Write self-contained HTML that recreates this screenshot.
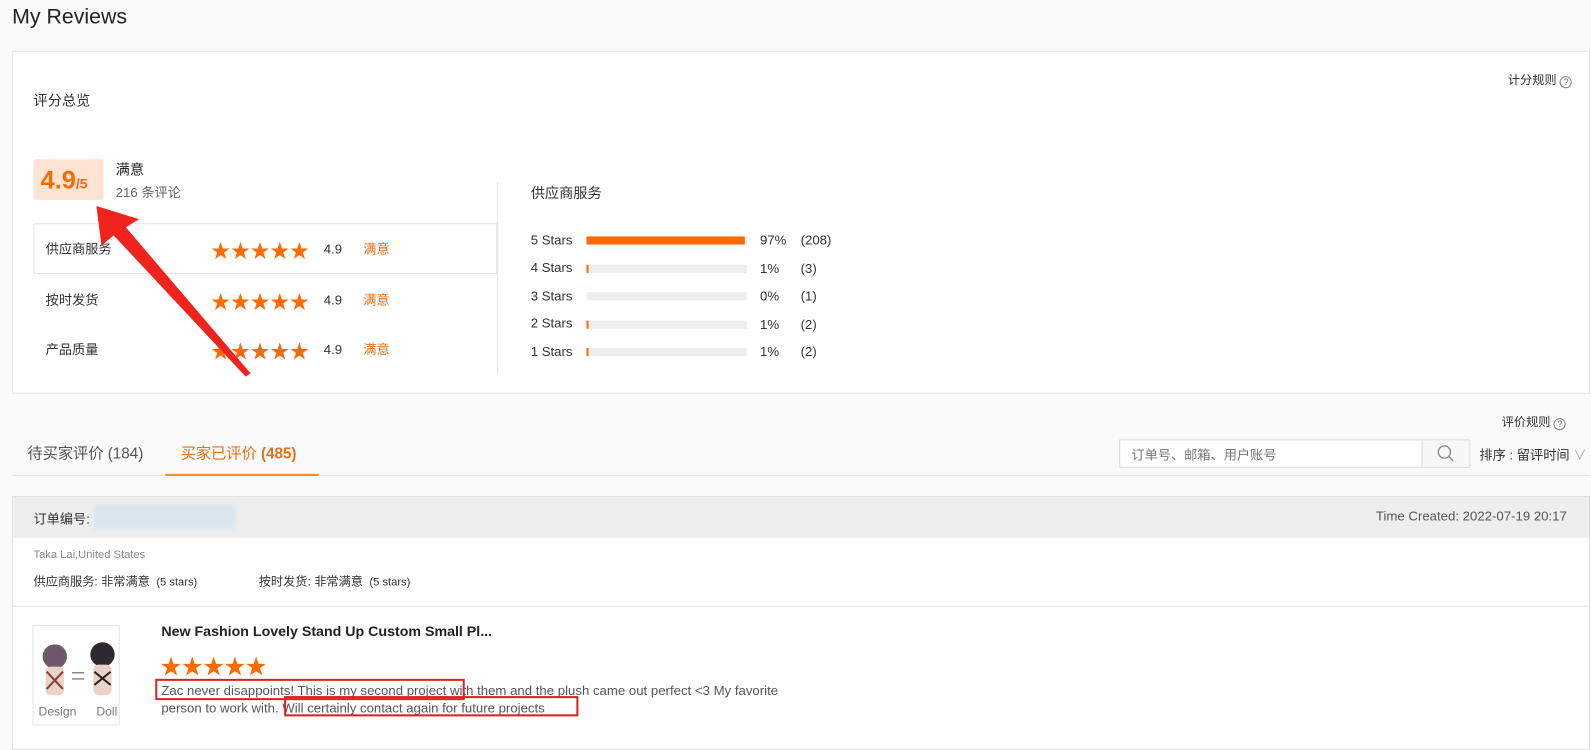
<!DOCTYPE html>
<html><head><meta charset="utf-8"><style>
*{margin:0;padding:0;box-sizing:border-box}
body{width:1591px;height:734px;overflow:hidden;background:#fafafa;font-family:"Liberation Sans","Noto Sans CJK SC",sans-serif;color:#333;position:relative}
#w{position:absolute;left:0;top:0;width:1568px;height:724px;transform:scale(1.0147);transform-origin:0 0}
.a{position:absolute;white-space:nowrap}
.star{color:#ff6a00;letter-spacing:0}
.bar{position:absolute;left:578px;width:158px;height:8px;background:#eee}
.bar i{display:block;height:8px;background:#ff6a00}
.q{display:inline-block;width:12px;height:12px;border:1px solid #888;border-radius:50%;font-size:9px;text-align:center;line-height:10px;color:#666;vertical-align:-1px}
</style></head><body><div id="w">
<div class="a" style="left:12px;top:5px;font-size:21px;color:#222">My Reviews</div>
<div class="a" style="left:12px;top:50px;width:1555px;height:338px;background:#fff;border:1px solid #e3e3e3"></div>
<div class="a" style="left:33px;top:89px;font-size:14px">评分总览</div>
<div class="a" style="left:1486px;top:70px;font-size:12px">计分规则 <span class="q">?</span></div>
<div class="a" style="left:33px;top:157px;width:69px;height:40px;background:#fde3d2;border-radius:2px;color:#ff6a00;font-weight:bold;font-size:25px;line-height:42px;padding-left:7px">4.9<span style="font-size:14px">/5</span></div>
<div class="a" style="left:114px;top:157px;font-size:14px;color:#222">满意</div>
<div class="a" style="left:114px;top:179px;font-size:13px;color:#666">216 条评论</div>
<div class="a" style="left:490px;top:180px;width:1px;height:188px;background:#e3e3e3"></div>
<div class="a" style="left:33px;top:220px;width:457px;height:50px;border:1px solid #e3e3e3"></div>
<div class="a" style="left:45px;top:235px;font-size:13px">供应商服务</div>
<div class="a" style="left:45px;top:285px;font-size:13px">按时发货</div>
<div class="a" style="left:45px;top:334px;font-size:13px">产品质量</div>
<div class="a star" style="left:208px;top:233px;font-size:19px;letter-spacing:.4px">★★★★★</div>
<div class="a star" style="left:208px;top:283px;font-size:19px;letter-spacing:.4px">★★★★★</div>
<div class="a star" style="left:208px;top:332px;font-size:19px;letter-spacing:.4px">★★★★★</div>
<div class="a" style="left:319px;top:238px;font-size:13px">4.9</div>
<div class="a" style="left:319px;top:288px;font-size:13px">4.9</div>
<div class="a" style="left:319px;top:337px;font-size:13px">4.9</div>
<div class="a" style="left:358px;top:235px;font-size:13px;color:#e5711c">满意</div>
<div class="a" style="left:358px;top:285px;font-size:13px;color:#e5711c">满意</div>
<div class="a" style="left:358px;top:334px;font-size:13px;color:#e5711c">满意</div>
<div class="a" style="left:523px;top:180px;font-size:14px">供应商服务</div>
<div class="a" style="left:523px;top:229px;font-size:13px">5 Stars</div>
<div class="a" style="left:523px;top:256px;font-size:13px">4 Stars</div>
<div class="a" style="left:523px;top:284px;font-size:13px">3 Stars</div>
<div class="a" style="left:523px;top:311px;font-size:13px">2 Stars</div>
<div class="a" style="left:523px;top:339px;font-size:13px">1 Stars</div>
<div class="bar" style="top:233px"><i style="width:156px"></i></div>
<div class="bar" style="top:261px"><i style="width:2px"></i></div>
<div class="bar" style="top:288px"></div>
<div class="bar" style="top:316px"><i style="width:2px"></i></div>
<div class="bar" style="top:343px"><i style="width:2px"></i></div>
<div class="a" style="left:749px;top:229px;font-size:13px">97%</div>
<div class="a" style="left:749px;top:257px;font-size:13px">1%</div>
<div class="a" style="left:749px;top:284px;font-size:13px">0%</div>
<div class="a" style="left:749px;top:312px;font-size:13px">1%</div>
<div class="a" style="left:749px;top:339px;font-size:13px">1%</div>
<div class="a" style="left:789px;top:229px;font-size:13px">(208)</div>
<div class="a" style="left:789px;top:257px;font-size:13px">(3)</div>
<div class="a" style="left:789px;top:284px;font-size:13px">(1)</div>
<div class="a" style="left:789px;top:312px;font-size:13px">(2)</div>
<div class="a" style="left:789px;top:339px;font-size:13px">(2)</div>
<div class="a" style="left:1480px;top:407px;font-size:12px">评价规则 <span class="q">?</span></div>
<div class="a" style="left:27px;top:436px;font-size:15px;color:#555">待买家评价 (184)</div>
<div class="a" style="left:178px;top:436px;font-size:15px;color:#e5711c">买家已评价 <b>(485)</b></div>
<div class="a" style="left:12px;top:468px;width:1555px;height:1px;background:#e3e3e3"></div>
<div class="a" style="left:163px;top:467px;width:151px;height:2px;background:#f08a30"></div>
<div class="a" style="left:1103px;top:433px;width:346px;height:28px;border:1px solid #d9d9d9;background:#fff"></div>
<div class="a" style="left:1401px;top:434px;width:47px;height:26px;border-left:1px solid #d9d9d9;background:#f7f7f7"></div>
<svg class="a" style="left:1415px;top:437px" width="20" height="20"><circle cx="8.5" cy="8.5" r="6" fill="none" stroke="#888" stroke-width="1.3"/><line x1="13" y1="13" x2="17" y2="17" stroke="#888" stroke-width="1.3"/></svg>
<div class="a" style="left:1115px;top:438px;font-size:13px;color:#777">订单号、邮箱、用户账号</div>
<div class="a" style="left:1458px;top:438px;font-size:13px">排序 : 留评时间 <span style="color:#aaa">∨</span></div>
<div class="a" style="left:12px;top:489px;width:1555px;height:250px;background:#fff;border:1px solid #ddd"></div>
<div class="a" style="left:13px;top:490px;width:1553px;height:40px;background:#eee"></div>
<div class="a" style="left:33px;top:501px;font-size:13px">订单编号:</div>
<div class="a" style="left:92px;top:497px;width:140px;height:24px;background:#d6e4ef;opacity:.8;filter:blur(2px)"></div>
<div class="a" style="left:1356px;top:501px;font-size:13px;color:#555">Time Created: 2022-07-19 20:17</div>
<div class="a" style="left:33px;top:541px;font-size:11px;color:#888">Taka Lai,United States</div>
<div class="a" style="left:33px;top:564px;font-size:12px">供应商服务: 非常满意 <span style="font-size:11px">&nbsp;(5 stars)</span></div>
<div class="a" style="left:255px;top:564px;font-size:12px">按时发货: 非常满意 <span style="font-size:11px">&nbsp;(5 stars)</span></div>
<div class="a" style="left:13px;top:597px;width:1553px;height:1px;background:#e8e8e8"></div>
<div class="a" style="left:32px;top:616px;width:86px;height:99px;border:1px solid #e3e3e3;background:#fff"></div>
<svg class="a" style="left:33px;top:617px" width="84" height="97"><circle cx="21" cy="30" r="12" fill="#6d5870"/><rect x="12" y="40" width="18" height="28" rx="5" fill="#e8d3c6"/><path d="M13 45L29 62M29 45L13 62" stroke="#8a3a3a" stroke-width="2"/><circle cx="68" cy="28" r="12" fill="#2e2830"/><rect x="59" y="38" width="18" height="30" rx="5" fill="#e8d3c6"/><path d="M60 45L76 58M76 45L60 58" stroke="#222" stroke-width="2"/><path d="M38 46h12M38 52h12" stroke="#888" stroke-width="1.5"/><text x="5" y="88" font-size="12" fill="#777" font-family="Liberation Sans">Design</text><text x="62" y="88" font-size="12" fill="#777" font-family="Liberation Sans">Doll</text></svg>
<div class="a" style="left:159px;top:614px;font-size:14px;font-weight:bold;color:#222">New Fashion Lovely Stand Up Custom Small Pl...</div>
<div class="a star" style="left:158px;top:641px;font-size:21px">★★★★★</div>
<div class="a" style="left:159px;top:672px;font-size:13px;color:#555;line-height:17px">Zac never disappoints! This is my second project with them and the plush came out perfect &lt;3 My favorite<br>person to work with. Will certainly contact again for future projects</div>
<div class="a" style="left:153px;top:669px;width:305px;height:21px;border:2px solid #e02020"></div>
<div class="a" style="left:280px;top:686px;width:290px;height:20px;border:2px solid #e02020"></div>
<svg class="a" style="left:0;top:0" width="400" height="400"><polygon points="95,203 137,216 124,224 247,368 242,371 112,232 100,242" fill="#f0241c"/></svg>
</div></body></html>
